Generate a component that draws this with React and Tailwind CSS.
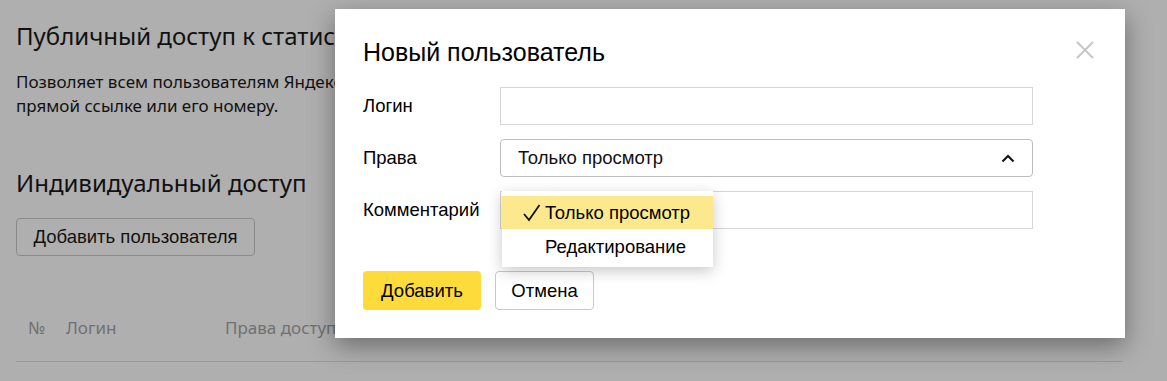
import React from "react";

const Field = ({ label, children }) => (
  <div className="flex items-center h-[38px]">
    <div className="w-[137px] text-[18.5px] text-black">{label}</div>
    <div className="w-[533px] h-full">{children}</div>
  </div>
);

export default function App() {
  return (
    <div className="relative w-[1167px] h-[381px] overflow-hidden bg-[#afafaf] font-['Liberation_Sans',sans-serif] text-[#111]">
      {/* page behind the overlay */}
      <div className="px-4 pt-[20px] font-['Noto_Sans',sans-serif]">
        <h2 className="text-[24px] leading-[32px] whitespace-nowrap">Публичный доступ к статистике</h2>
        <p className="mt-[18px] text-[17px] leading-[24px] w-[700px]">
          Позволяет всем пользователям Яндекса просматривать статистику счётчика по
          <br />
          прямой ссылке или его номеру.
        </p>
        <h2 className="mt-[49px] text-[24px] leading-[32px]">Индивидуальный доступ</h2>
        <button className="mt-[19px] h-[38px] w-[239px] rounded-[4px] border border-[#8a8a8a] text-[18.5px] font-['Liberation_Sans',sans-serif]">
          Добавить пользователя
        </button>
        <div className="mt-[60px] flex text-[17px] text-[#717171] h-[24px] items-center">
          <span className="ml-[12px] w-[38px]">№</span>
          <span className="w-[159px]">Логин</span>
          <span>Права доступа</span>
        </div>
        <div className="mt-[21px] h-px w-[1107px] bg-[#9a9a9a]" />
      </div>

      {/* modal */}
      <div className="absolute left-[335px] top-[9px] w-[790px] h-[329px] bg-white shadow-[0_8px_24px_rgba(0,0,0,0.38)] px-7 pt-[28px]">
        <div className="flex items-start justify-between">
          <h3 className="text-[25px] leading-[30px] text-black">Новый пользователь</h3>
          <svg className="mt-[3px] mr-[2px]" width="20" height="20" viewBox="0 0 20 20" fill="none" stroke="#c6c6c6" strokeWidth="2">
            <path d="M2 2 L18 18 M18 2 L2 18" />
          </svg>
        </div>
        <div className="mt-[20px] flex flex-col gap-[14px]">
          <Field label="Логин">
            <div className="h-full border border-[#d6d6d6]" />
          </Field>
          <Field label="Права">
            <div className="h-full border border-[#bdbdbd] rounded-[4px] flex items-center justify-between px-[17px] text-[18.5px]">
              <span>Только просмотр</span>
              <svg width="14" height="9" viewBox="0 0 14 9" fill="none" stroke="#111" strokeWidth="2">
                <path d="M1.5 7.5 L7 2 L12.5 7.5" />
              </svg>
            </div>
          </Field>
          <div className="relative">
            <Field label="Комментарий">
              <div className="h-full border border-[#d6d6d6]" />
            </Field>
            <div className="absolute left-[139px] top-0 w-[211px] bg-white shadow-[0_4px_14px_rgba(0,0,0,0.22)] pt-[5px] pb-[3px] text-[18.5px] text-black">
              <div className="h-[33px] bg-[#fde98d] flex items-center pl-[21px]">
                <svg className="mr-[4px]" width="18" height="18" viewBox="0 0 18 18" fill="none" stroke="#111" strokeWidth="1.8">
                  <path d="M1 10 L6 16 L16.5 1" />
                </svg>
                <span>Только просмотр</span>
              </div>
              <div className="h-[35px] flex items-center pl-[43px]">Редактирование</div>
            </div>
          </div>
        </div>
        <div className="mt-[42px] flex gap-[14px]">
          <button className="h-[39px] w-[118px] rounded-[4px] bg-[#fddb3a] text-[18.5px] text-black">Добавить</button>
          <button className="h-[39px] w-[99px] rounded-[4px] border border-[#c9c9c9] text-[18.5px] text-black">Отмена</button>
        </div>
      </div>
    </div>
  );
}
